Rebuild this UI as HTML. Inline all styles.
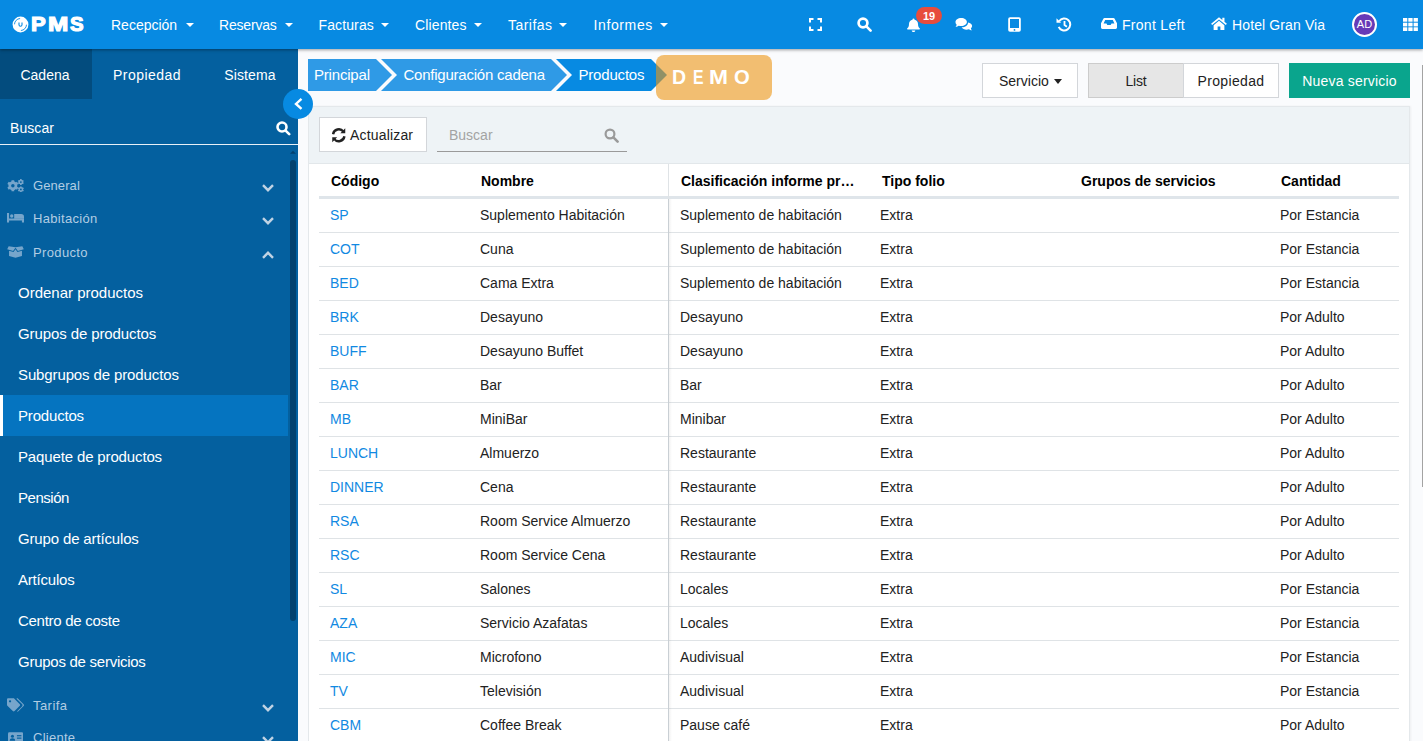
<!DOCTYPE html>
<html lang="es">
<head>
<meta charset="utf-8">
<title>PMS - Productos</title>
<style>
*{box-sizing:border-box;margin:0;padding:0}
html,body{width:1423px;height:741px;overflow:hidden;background:#fafbfd;font-family:"Liberation Sans",sans-serif;color:#222}
/* top bar */
#top{position:absolute;left:0;top:0;width:1423px;height:49px;background:#078ae2;box-shadow:0 1px 3px rgba(0,0,0,.38);z-index:20;color:#fff}
#top .nav{position:absolute;top:1px;height:49px;line-height:49px;font-size:14px;white-space:nowrap}
#top .nav i.c{position:absolute;top:22px;width:0;height:0;border-left:4px solid transparent;border-right:4px solid transparent;border-top:4px solid #fff}
#top svg{position:absolute}
#logo{position:absolute;left:0;top:0;width:100px;height:49px}
#logo span{position:absolute;top:12px;font-weight:bold;font-size:21px;line-height:24px;color:#fff;-webkit-text-stroke:1.2px #fff;transform-origin:left center}
#badge{position:absolute;left:916px;top:7px;width:26px;height:17px;border-radius:9px;background:#e74c3c;color:#fff;font-weight:bold;font-size:11px;line-height:18px;text-align:center}
#avatar{position:absolute;left:1352px;top:12px;width:25px;height:25px;border-radius:50%;background:#673ab7;border:2px solid #fff;color:#fff;font-size:11px;line-height:21px;text-align:center}
/* sidebar */
#side{position:absolute;left:0;top:49px;width:298px;height:692px;background:#04609f;color:#fff;z-index:5;overflow:hidden}
#side .tab{position:absolute;top:0;height:50px;line-height:52px;font-size:14px;text-align:center}
#side .grp{position:absolute;left:33px;font-size:13px;color:#b2cde3;line-height:16px;white-space:nowrap}
#side .sub{position:absolute;left:18px;font-size:15px;line-height:18px;color:#fff;white-space:nowrap}
#side .act{position:absolute;left:0;width:288px;height:41px;background:#0574c0;border-left:3px solid #fff}
#side svg{position:absolute}
#sb{position:absolute;left:290px;top:111px;width:6px;height:461px;border-radius:4px;background:#03426f}
#tog{position:absolute;left:283px;top:89px;width:30px;height:30px;border-radius:50%;background:#078ae2;z-index:10}
/* main */
.bc{position:absolute;top:59px;height:32px;line-height:32px;color:#fff;font-size:15px;white-space:nowrap}
#demo{position:absolute;left:656px;top:55px;width:116px;height:45px;border-radius:8px;background:rgba(236,150,20,.6);z-index:3}
#demo span{position:absolute;top:0;color:#fff;font-weight:bold;font-size:19.5px;line-height:44px;transform-origin:left center}
.btn{position:absolute;top:63px;height:35px;line-height:35px;border:1px solid #d3d6da;background:#fff;font-size:14px;color:#222;white-space:nowrap}
#panel{position:absolute;left:308px;top:106px;width:1102px;height:640px;background:#fff;border:1px solid #e4e8eb;box-shadow:1px 0 2px rgba(0,0,0,.05)}
#tool{position:absolute;left:0;top:0;width:1100px;height:57px;background:#eef3f6;border-bottom:1px solid #e2e7ea}
#vsep{position:absolute;left:668px;top:164px;width:1px;height:580px;background:#dfe3e6;z-index:2}
#vsep2{position:absolute;left:668px;top:199px;width:4px;height:545px;background:linear-gradient(90deg,#c9cfd4 0,#c9cfd4 1px,rgba(0,0,0,.05) 1px,rgba(0,0,0,0) 4px);z-index:2}
table{position:absolute;left:319px;top:163px;width:1080px;border-collapse:separate;border-spacing:0;table-layout:fixed}
th{height:36px;vertical-align:middle;text-align:left;font-weight:bold;padding-left:12px;color:#000;border-bottom:3px solid #dfe5ea;font-size:14px;white-space:nowrap;padding-top:2px}
td{height:34px;padding-left:11px;padding-bottom:2px;border-bottom:1px solid #dfe3e6;color:#222;white-space:nowrap;font-size:14px}
td.k{color:#1189e2}
td.s,th.s{padding-left:11px}
th.s{padding-left:12px}

</style>
</head>
<body>
<div id="top">
  <svg style="left:12px;top:15.500px" width="17" height="17" viewBox="0 0 17 17"><circle cx="8.500" cy="8.500" r="7.900" fill="#fff"/><path d="M2.500 8.300A6 6 0 0 1 8.100 2.500M14.500 8.700A6 6 0 0 1 8.900 14.500" fill="none" stroke="#078ae2" stroke-width="0.900"/><path d="M7 6.500v2.300a1.500 1.500 0 0 0 3 0V6.500" fill="none" stroke="#078ae2" stroke-width="1.100"/></svg>
  <div id="logo"><span style="left:31px;transform:scaleX(1.05)">P</span><span style="left:48px;transform:scaleX(1.16)">M</span><span style="left:70px;transform:scaleX(.97)">S</span></div>
  <div class="nav" style="left:111px">Recepción<i class="c" style="left:74.500px"></i></div>
  <div class="nav" style="left:219px;letter-spacing:-0.190px">Reservas<i class="c" style="left:66px"></i></div>
  <div class="nav" style="left:318.500px;letter-spacing:0.120px">Facturas<i class="c" style="left:62.500px"></i></div>
  <div class="nav" style="left:415px;letter-spacing:0.130px">Clientes<i class="c" style="left:59px"></i></div>
  <div class="nav" style="left:508px;letter-spacing:0.460px">Tarifas<i class="c" style="left:51px"></i></div>
  <div class="nav" style="left:593.500px;letter-spacing:0.620px">Informes<i class="c" style="left:66.500px"></i></div>
  <!-- expand -->
  <svg style="left:809px;top:17.800px" width="13" height="13" viewBox="0 0 13 13" fill="none" stroke="#fff" stroke-width="2"><path d="M1 4.5V1h3.5M8.5 1H12v3.5M12 8.5V12H8.5M4.5 12H1V8.500"/></svg>
  <!-- search -->
  <svg style="left:857px;top:16.800px" width="15" height="15" viewBox="0 0 15 15" fill="none" stroke="#fff"><circle cx="6" cy="6" r="4.400" stroke-width="2.700"/><path d="M9.4 9.4L13.6 13.6" stroke-width="2.6" stroke-linecap="round"/></svg>
  <!-- bell -->
  <svg style="left:906px;top:17.800px" width="15" height="14.600" viewBox="0 0 15 16" preserveAspectRatio="none" fill="#fff"><path d="M7.500 0.500c.6 0 1 .4 1 1v.5c2.200.5 3.500 2.300 3.500 4.500 0 3 1 4 1.700 4.800.500.600.1 1.400-.7 1.400H2c-.8 0-1.200-.8-.7-1.400C2 10.500 3 9.500 3 6.500c0-2.200 1.300-4 3.500-4.500v-.5c0-.6.4-1 1-1z"/><path d="M5.700 13.600h3.600a1.800 1.800 0 0 1-3.600 0z"/></svg>
  <div id="badge">19</div>
  <!-- comments -->
  <svg style="left:955px;top:17px" width="18" height="15" viewBox="0 0 18 15" fill="#fff"><path d="M6.200 1C2.900 1 .5 2.900.5 5.200c0 1 .5 1.900 1.200 2.600-.2.800-.8 1.600-1.100 1.900 1.300 0 2.500-.5 3.200-1 .7.300 1.500.4 2.400.4 3.300 0 5.700-1.700 5.700-4S9.500 1 6.200 1z"/><path d="M13 5.400c.1 2.900-2.900 5-6.400 4.900.9 1.500 2.800 2.400 4.900 2.400.8 0 1.600-.1 2.300-.4.700.5 1.900 1 3.200 1-.3-.3-.9-1.100-1.100-1.900.7-.7 1.200-1.600 1.200-2.600 0-1.700-1.700-3.100-4.100-3.400z"/></svg>
  <!-- tablet -->
  <svg style="left:1007.500px;top:17px" width="13" height="15" viewBox="0 0 13 15"><rect x="0.200" y="0.200" width="12.600" height="14.600" rx="1.800" fill="#fff"/><rect x="2" y="2" width="9" height="9" fill="#078ae2"/><circle cx="6.500" cy="12.900" r="0.900" fill="#078ae2"/></svg>
  <!-- history -->
  <svg style="left:1055.500px;top:17px" width="16" height="15" viewBox="0 0 16 15" fill="none" stroke="#fff"><path d="M3.200 4.200A6 6 0 1 1 2.700 9.800" stroke-width="2"/><path d="M0.500 1.200v4.600h4.600z" fill="#fff" stroke="none"/><path d="M8.500 4v4l2.400 1.800" stroke-width="1.800"/></svg>
  <!-- inbox -->
  <svg style="left:1101px;top:18px" width="16" height="11" viewBox="0 0 16 11" fill="#fff"><path d="M3.500 0h9c.4 0 .8.200 1 .6L16 5.300V9.600c0 .8-.6 1.400-1.400 1.400H1.400C.6 11 0 10.400 0 9.600V5.300L2.500.6c.2-.4.600-.6 1-.6zM4.200 1.900 2.600 5.400h2.900l.8 1.600h3.400l.8-1.600h2.900L11.800 1.900z"/></svg>
  <div class="nav" style="left:1122px;letter-spacing:0.290px">Front Left</div>
  <!-- home -->
  <svg style="left:1211px;top:17px" width="16" height="13" viewBox="0 0 17 14" fill="#fff"><path d="M8.500 0.200 0 7.300l1.100 1.400L8.500 2.600l7.400 6.100L17 7.300l-2.600-2.200V0.800h-2.300v2.400z"/><path d="M8.500 4 2.700 8.800V14h4.300V10.300h3V14h4.300V8.800z"/></svg>
  <div class="nav" style="left:1232px;letter-spacing:0.120px">Hotel Gran Via</div>
  <div id="avatar">AD</div>
  <!-- grid -->
  <svg style="left:1403px;top:18px" width="15" height="13" viewBox="0 0 15 13" fill="#fff"><rect x="0" y="0" width="4.300" height="3.700"/><rect x="5.300" y="0" width="4.300" height="3.700"/><rect x="10.600" y="0" width="4.300" height="3.700"/><rect x="0" y="4.700" width="4.300" height="3.700"/><rect x="5.300" y="4.700" width="4.300" height="3.700"/><rect x="10.600" y="4.700" width="4.300" height="3.700"/><rect x="0" y="9.300" width="4.300" height="3.700"/><rect x="5.300" y="9.300" width="4.300" height="3.700"/><rect x="10.600" y="9.300" width="4.300" height="3.700"/></svg>
</div>

<div id="side">
  <div class="tab" style="left:0;width:92px;background:#034c7e;padding-right:2px">Cadena</div>
  <div class="tab" style="left:92px;width:110px;letter-spacing:0.450px">Propiedad</div>
  <div class="tab" style="left:202px;width:96px;letter-spacing:0.120px">Sistema</div>
  <div style="position:absolute;left:10px;top:70px;font-size:14px;line-height:18px;letter-spacing:0.080px">Buscar</div>
  <svg style="left:275.500px;top:71.500px" width="15" height="15" viewBox="0 0 15 15" fill="none" stroke="#fff"><circle cx="6" cy="6" r="4.500" stroke-width="2.600"/><path d="M9.600 9.600L13.200 13.200" stroke-width="2.600" stroke-linecap="round"/></svg>
  <div style="position:absolute;left:0;top:95px;width:298px;height:1px;background:#e8f0f7"></div>
  <svg style="left:290px;top:101px" width="6" height="4" viewBox="0 0 7 4"><path d="M0 4L3.500 0.500 7 4z" fill="#03426f"/></svg>
  <div id="sb"></div>

  <!-- General: cogs -->
  <svg class="ico" style="left:7px;top:129.500px" width="17.500" height="13.500" viewBox="0 0 18 14" fill="#76a5cb"><g stroke="#76a5cb" stroke-width="2.800"><path d="M6 1.200v11.600M1 4.100l10 5.800M1 9.900l10-5.800"/></g><circle cx="6" cy="7" r="4.600"/><circle cx="6" cy="7" r="1.800" fill="#04609f"/><g stroke="#76a5cb" stroke-width="1.700"><path d="M14.300 0.100v6.200M11.600 1.650l5.400 3.100M11.600 4.750l5.400-3.100"/></g><circle cx="14.300" cy="3.200" r="2.400"/><circle cx="14.300" cy="3.200" r="0.950" fill="#04609f"/><g stroke="#76a5cb" stroke-width="1.700"><path d="M14.300 7.700v6.200M11.600 9.250l5.400 3.100M11.600 12.350l5.400-3.100"/></g><circle cx="14.300" cy="10.800" r="2.400"/><circle cx="14.300" cy="10.800" r="0.950" fill="#04609f"/></svg>
  <div class="grp" style="top:129px;letter-spacing:0.090px">General</div>
  <svg style="left:262px;top:134.500px" width="12" height="8" viewBox="0 0 12 8" fill="none" stroke="#c0d3e4" stroke-width="2.400"><path d="M1 1.200l5 5 5-5"/></svg>

  <!-- Habitacion: bed -->
  <svg class="ico" style="left:7px;top:164.300px" width="17" height="9.500" viewBox="0 0 18 10" fill="#76a5cb"><path d="M0 0h2.200v5.700h15.800V10h-2.200V8H2.200v2H0z"/><circle cx="5" cy="3.100" r="1.800"/><path d="M7.600 1h7.400a3 3 0 0 1 3 3v2H7.600z"/></svg>
  <div class="grp" style="top:162px;letter-spacing:0.320px">Habitación</div>
  <svg style="left:262px;top:167.500px" width="12" height="8" viewBox="0 0 12 8" fill="none" stroke="#c0d3e4" stroke-width="2.400"><path d="M1 1.200l5 5 5-5"/></svg>

  <!-- Producto: box-open -->
  <svg class="ico" style="left:7px;top:197px" width="17" height="12" viewBox="0 0 18 13" fill="#76a5cb"><path d="M1.600 0.300 9 1.300 16.400 0.300 18 3.500 11.600 5.300 9 1.800 6.400 5.300 0 3.500z"/><path d="M2 5.200l4.900 1.400L9 3.600l2.100 3 4.900-1.400v5.500L9 12.800 2 10.700z"/></svg>
  <div class="grp" style="top:196px;letter-spacing:0.360px">Producto</div>
  <svg style="left:262px;top:201.500px" width="12" height="8" viewBox="0 0 12 8" fill="none" stroke="#c0d3e4" stroke-width="2.400"><path d="M1 6.800l5-5 5 5"/></svg>

<div class="sub" style="top:235px;letter-spacing:0.00px">Ordenar productos</div>
<div class="sub" style="top:276px;letter-spacing:-0.10px">Grupos de productos</div>
<div class="sub" style="top:317px;letter-spacing:-0.12px">Subgrupos de productos</div>
<div class="act" style="top:346px"></div>
<div class="sub" style="top:358px;letter-spacing:-0.18px">Productos</div>
<div class="sub" style="top:399px;letter-spacing:-0.14px">Paquete de productos</div>
<div class="sub" style="top:440px;letter-spacing:-0.47px">Pensión</div>
<div class="sub" style="top:481px;letter-spacing:-0.15px">Grupo de artículos</div>
<div class="sub" style="top:522px;letter-spacing:-0.21px">Artículos</div>
<div class="sub" style="top:563px;letter-spacing:-0.28px">Centro de coste</div>
<div class="sub" style="top:604px;letter-spacing:-0.26px">Grupos de servicios</div>

  <!-- Tarifa: tags -->
  <svg class="ico" style="left:7px;top:649px" width="17.200" height="14" viewBox="0 0 18 14" fill="#76a5cb"><path d="M0 1.300C0 .6.600 0 1.300 0h5.500c.4 0 .7.100.9.400l5.700 5.700c.5.500.5 1.300 0 1.800l-5.500 5.500c-.5.500-1.300.5-1.800 0L.4 7.700C.100 7.500 0 7.200 0 6.800z"/><circle cx="3.200" cy="3.200" r="1.200" fill="#04609f"/><path d="M10 0.400c.3-.5 1-.5 1.400-.1l6 6c.5.500.5 1.300 0 1.800l-5.500 5.500c-.4.400-1 .5-1.500.2l5.300-5.300c.7-.7.7-1.800 0-2.500z"/></svg>
  <div class="grp" style="top:649px;letter-spacing:0.440px">Tarifa</div>
  <svg style="left:262px;top:654.500px" width="12" height="8" viewBox="0 0 12 8" fill="none" stroke="#c0d3e4" stroke-width="2.400"><path d="M1 1.200l5 5 5-5"/></svg>

  <!-- Cliente: address-card -->
  <svg class="ico" style="left:8px;top:683px" width="15.200" height="12" viewBox="0 0 17 13" fill="#76a5cb"><rect x="0" y="0" width="17" height="13" rx="1.500"/><circle cx="5" cy="4.500" r="1.700" fill="#04609f"/><path d="M2 9.500c0-1.700 1.300-2.600 3-2.600s3 .9 3 2.600z" fill="#04609f"/><rect x="10" y="3.300" width="5" height="1.300" fill="#04609f"/><rect x="10" y="6" width="5" height="1.300" fill="#04609f"/></svg>
  <div class="grp" style="top:681px;letter-spacing:0.260px">Cliente</div>
  <svg style="left:262px;top:686.500px" width="12" height="8" viewBox="0 0 12 8" fill="none" stroke="#c0d3e4" stroke-width="2.400"><path d="M1 1.200l5 5 5-5"/></svg>
</div>
<div id="tog"><svg style="position:absolute;left:10px;top:7px" width="12" height="16" viewBox="0 0 12 16" fill="none" stroke="#fff" stroke-width="2.400"><path d="M8.500 2.900L3 7.900 8.500 12.900"/></svg></div>

<!-- breadcrumbs -->
<svg style="position:absolute;left:308px;top:59px;z-index:1" width="362" height="32" viewBox="0 0 362 32">
  <path d="M0 0H68L84 16 68 32H0z" fill="#2f9ae6"/>
  <path d="M73 0H243L259 16 243 32H73L89 16z" fill="#2f9ae6"/>
  <path d="M248 0H343L359 16 343 32H248L264 16z" fill="#078ae2"/>
</svg>
<div class="bc" style="left:314px;z-index:2;letter-spacing:-0.190px">Principal</div>
<div class="bc" style="left:403.500px;z-index:2;letter-spacing:-0.230px">Configuración cadena</div>
<div class="bc" style="left:578.500px;z-index:2;letter-spacing:-0.190px">Productos</div>
<div id="demo"><span style="left:16px">D</span><span style="left:36.500px;transform:scaleX(.81)">E</span><span style="left:53px;transform:scaleX(1.17)">M</span><span style="left:78px;transform:scaleX(1.04)">O</span></div>
<div class="btn" style="left:982px;width:96px;padding-left:16px">Servicio<i style="position:absolute;left:70.500px;top:15px;border-left:4.400px solid transparent;border-right:4.400px solid transparent;border-top:5px solid #222"></i></div>
<div class="btn" style="left:1088px;width:96px;background:#e6e6e6;border-color:#ccc;text-align:center;letter-spacing:-0.200px">List</div>
<div class="btn" style="left:1183px;width:96px;text-align:center;letter-spacing:0.360px">Propiedad</div>
<div class="btn" style="left:1289px;width:121px;background:#0aa58d;border-color:#0aa58d;color:#fff;text-align:center;letter-spacing:0.180px">Nueva servicio</div>
<div id="panel"><div id="tool">
  <div style="position:absolute;left:10px;top:10px;width:108px;height:35px;border:1px solid #d3d6da;background:#fff;font-size:14px;line-height:35px;padding-left:30px;color:#222;letter-spacing:0.170px">Actualizar
    <svg style="position:absolute;left:11px;top:10px" width="15.500" height="14.500" viewBox="0 0 15 14" fill="none" stroke="#222" stroke-width="2.300"><path d="M2 6A5.600 5.600 0 0 1 12 3.500"/><path d="M13 8A5.600 5.600 0 0 1 3 10.500"/><path d="M13.800 0.300v4.800H9z" fill="#222" stroke="none"/><path d="M1.200 13.700V8.900H6z" fill="#222" stroke="none"/></svg>
  </div>
  <div style="position:absolute;left:128px;top:10px;width:190px;height:35px;border-bottom:1px solid #9a9a9a;font-size:14px;line-height:37px;padding-left:12px;color:#a3a3a3">Buscar
    <svg style="position:absolute;left:167px;top:11px" width="15" height="15" viewBox="0 0 15 15" fill="none" stroke="#9a9a9a"><circle cx="6" cy="6" r="4.400" stroke-width="2.200"/><path d="M9.400 9.400L13.600 13.600" stroke-width="2.600" stroke-linecap="round"/></svg>
  </div>
</div></div>
<div id="vsep"></div><div id="vsep2"></div>

<div style="position:absolute;left:1422px;top:65px;width:1px;height:422px;background:#a3a3a3;z-index:4"></div>

<table>
<colgroup><col style="width:150px"><col style="width:200px"><col style="width:200px"><col style="width:200px"><col style="width:200px"><col style="width:130px"></colgroup>
<thead><tr><th>Código</th><th>Nombre</th><th class="s">Clasificación informe pr…</th><th style="padding-left:13px">Tipo folio</th><th>Grupos de servicios</th><th>Cantidad</th></tr></thead>
<tbody>
<tr><td class="k">SP</td><td>Suplemento Habitación</td><td class="s">Suplemento de habitación</td><td>Extra</td><td></td><td>Por Estancia</td></tr>
<tr><td class="k">COT</td><td>Cuna</td><td class="s">Suplemento de habitación</td><td>Extra</td><td></td><td>Por Estancia</td></tr>
<tr><td class="k">BED</td><td>Cama Extra</td><td class="s">Suplemento de habitación</td><td>Extra</td><td></td><td>Por Estancia</td></tr>
<tr><td class="k">BRK</td><td>Desayuno</td><td class="s">Desayuno</td><td>Extra</td><td></td><td>Por Adulto</td></tr>
<tr><td class="k">BUFF</td><td>Desayuno Buffet</td><td class="s">Desayuno</td><td>Extra</td><td></td><td>Por Adulto</td></tr>
<tr><td class="k">BAR</td><td>Bar</td><td class="s">Bar</td><td>Extra</td><td></td><td>Por Adulto</td></tr>
<tr><td class="k">MB</td><td>MiniBar</td><td class="s">Minibar</td><td>Extra</td><td></td><td>Por Adulto</td></tr>
<tr><td class="k">LUNCH</td><td>Almuerzo</td><td class="s">Restaurante</td><td>Extra</td><td></td><td>Por Adulto</td></tr>
<tr><td class="k">DINNER</td><td>Cena</td><td class="s">Restaurante</td><td>Extra</td><td></td><td>Por Adulto</td></tr>
<tr><td class="k">RSA</td><td>Room Service Almuerzo</td><td class="s">Restaurante</td><td>Extra</td><td></td><td>Por Adulto</td></tr>
<tr><td class="k">RSC</td><td>Room Service Cena</td><td class="s">Restaurante</td><td>Extra</td><td></td><td>Por Adulto</td></tr>
<tr><td class="k">SL</td><td>Salones</td><td class="s">Locales</td><td>Extra</td><td></td><td>Por Estancia</td></tr>
<tr><td class="k">AZA</td><td>Servicio Azafatas</td><td class="s">Locales</td><td>Extra</td><td></td><td>Por Estancia</td></tr>
<tr><td class="k">MIC</td><td>Microfono</td><td class="s">Audivisual</td><td>Extra</td><td></td><td>Por Estancia</td></tr>
<tr><td class="k">TV</td><td>Televisión</td><td class="s">Audivisual</td><td>Extra</td><td></td><td>Por Estancia</td></tr>
<tr><td class="k">CBM</td><td>Coffee Break</td><td class="s">Pause café</td><td>Extra</td><td></td><td>Por Adulto</td></tr>
</tbody></table>
</body>
</html>
